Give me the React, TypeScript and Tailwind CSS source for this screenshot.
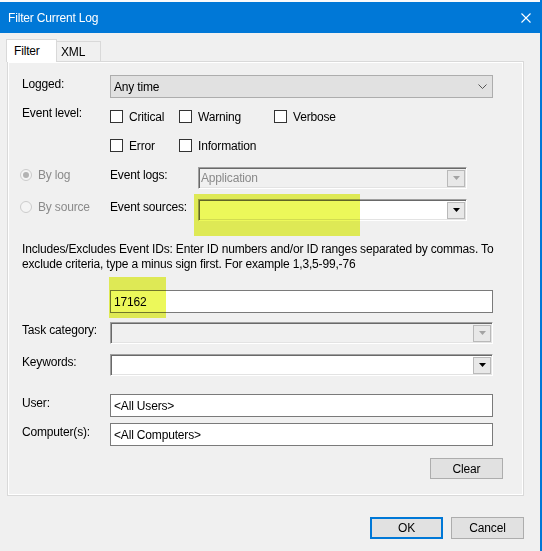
import React from "react";

function Arrow({ disabled }: { disabled?: boolean }) {
  return (
    <svg width="7" height="4" viewBox="0 0 7 4">
      <polygon points="0,0 7,0 3.5,4" fill={disabled ? "#a3a3a3" : "#000"} />
    </svg>
  );
}

function Combo({ width, disabled, text }: { width: string; disabled?: boolean; text?: string }) {
  return (
    <div
      className={`flex h-[22px] items-center justify-between border border-b-white border-l-[#a0a0a0] border-r-white border-t-[#a0a0a0] pr-px shadow-[inset_1px_1px_0_#696969,inset_-1px_-1px_0_#e3e3e3] ${width} ${
        disabled ? "bg-[#f0f0f0]" : "bg-white"
      }`}
    >
      <span className="pl-[2px] text-[#8a8a8a]">{text}</span>
      <div className="flex h-[17px] w-[18px] items-center justify-center border border-[#b9b9b9] bg-[#e8e8e8]">
        <Arrow disabled={disabled} />
      </div>
    </div>
  );
}

function Check({ label }: { label: string }) {
  return (
    <div className="flex h-[17px] items-center">
      <span className="h-[13px] w-[13px] border border-[#333] bg-white" />
      <span className="ml-[6px]">{label}</span>
    </div>
  );
}

function Radio({ label, checked }: { label: string; checked?: boolean }) {
  return (
    <div className="-ml-[2px] flex h-[16px] w-[90px] items-center text-[#8a8a8a]">
      <span className="flex h-[12px] w-[12px] items-center justify-center rounded-full border border-[#cccccc] bg-[#f4f4f4]">
        {checked && <span className="h-[6px] w-[6px] rounded-full bg-[#b3b3b3]" />}
      </span>
      <span className="ml-[6px]">{label}</span>
    </div>
  );
}

function TextBox({ value }: { value?: string }) {
  return (
    <div className="flex h-[23px] w-[383px] items-center border border-[#7a7a7a] bg-white pl-[3px]">
      {value}
    </div>
  );
}

export default function App() {
  return (
    <div className="flex h-[551px] w-[542px] flex-col border-r-2 border-[#0078d7] bg-[#f0f0f0] font-['Liberation_Sans',Arial,sans-serif] text-[12px] leading-[16px] tracking-[-0.17px] text-black">
      <div className="h-[2px] bg-[#fafafa]" />
      {/* Title bar */}
      <div className="flex h-[31px] items-center justify-between bg-[#0078d7] pl-[8px] pr-[9px] text-white">
        <span>Filter Current Log</span>
        <svg width="10" height="10" viewBox="0 0 10 10">
          <path d="M0.5 0.5 L9.5 9.5 M9.5 0.5 L0.5 9.5" stroke="#fff" strokeWidth="1.1" />
        </svg>
      </div>

      {/* Tabs */}
      <div className="mt-[6px] flex h-[22px] items-start pl-[6px]">
        <div className="relative z-10 flex h-[23px] w-[51px] items-center border border-b-0 border-[#d9d9d9] bg-white pl-[7px]">
          Filter
        </div>
        <div className="mt-[2px] flex h-[20px] w-[44px] items-center border border-b-0 border-l-0 border-[#d9d9d9] pl-[4px]">
          XML
        </div>
      </div>

      {/* Panel */}
      <div className="relative ml-[7px] flex h-[435px] w-[517px] flex-col border border-[#d9d9d9] pl-[14px] shadow-[inset_1px_1px_0_#fff,inset_-1px_-1px_0_#fff]">
        <div className="mt-[13px] flex">
          <span className="w-[88px] pt-[1px]">Logged:</span>
          <div className="flex h-[23px] w-[383px] items-center justify-between border border-[#adadad] bg-[#e1e1e1] pl-[3px] pr-[5px]">
            <span>Any time</span>
            <svg width="9" height="5" viewBox="0 0 9 5">
              <polyline points="0.5,0.5 4.5,4.5 8.5,0.5" fill="none" stroke="#555" strokeWidth="1" />
            </svg>
          </div>
        </div>

        <div className="mt-[7px] flex items-start">
          <span className="w-[88px]">Event level:</span>
          <div className="grid grid-cols-[69px_95px_auto] gap-y-[12px] pt-[3px]">
            <Check label="Critical" />
            <Check label="Warning" />
            <Check label="Verbose" />
            <Check label="Error" />
            <Check label="Information" />
          </div>
        </div>

        <div className="mt-[13px] flex items-start">
          <Radio label="By log" checked />
          <span className="w-[88px]">Event logs:</span>
          <Combo width="w-[269px]" disabled text="Application" />
        </div>

        <div className="mt-[10px] flex items-start">
          <Radio label="By source" />
          <span className="w-[88px]">Event sources:</span>
          <Combo width="w-[269px]" />
        </div>

        <p className="mt-[21px] whitespace-nowrap leading-[15px]">
          Includes/Excludes Event IDs: Enter ID numbers and/or ID ranges separated by commas. To
          <br />
          exclude criteria, type a minus sign first. For example 1,3,5-99,-76
        </p>

        <div className="ml-[88px] mt-[18px]">
          <TextBox value="17162" />
        </div>

        <div className="mt-[9px] flex items-start">
          <span className="w-[88px]">Task category:</span>
          <Combo width="w-[383px]" disabled />
        </div>

        <div className="mt-[10px] flex items-start">
          <span className="w-[88px]">Keywords:</span>
          <Combo width="w-[383px]" />
        </div>

        <div className="mt-[18px] flex items-start">
          <span className="w-[88px] pt-[1px]">User:</span>
          <TextBox value="<All Users>" />
        </div>

        <div className="mt-[6px] flex items-start">
          <span className="w-[88px] pt-[1px]">Computer(s):</span>
          <TextBox value="<All Computers>" />
        </div>

        <div className="mr-[20px] mt-[12px] flex justify-end">
          <button className="flex h-[21px] w-[73px] items-center justify-center border border-[#adadad] bg-[#e1e1e1]">
            Clear
          </button>
        </div>

        {/* highlighter marks */}
        <div className="pointer-events-none absolute left-[186px] top-[132px] h-[42px] w-[166px] bg-[#ecf85a] mix-blend-multiply" />
        <div className="pointer-events-none absolute left-[101px] top-[215px] h-[41px] w-[57px] bg-[#ecf85a] mix-blend-multiply" />
      </div>

      {/* Bottom buttons */}
      <div className="mt-[21px] flex justify-end gap-[8px] pr-[16px]">
        <button className="flex h-[22px] w-[73px] items-center justify-center border-2 border-[#0078d7] bg-[#e1e1e1]">
          OK
        </button>
        <button className="flex h-[22px] w-[73px] items-center justify-center border border-[#adadad] bg-[#e1e1e1]">
          Cancel
        </button>
      </div>
    </div>
  );
}
